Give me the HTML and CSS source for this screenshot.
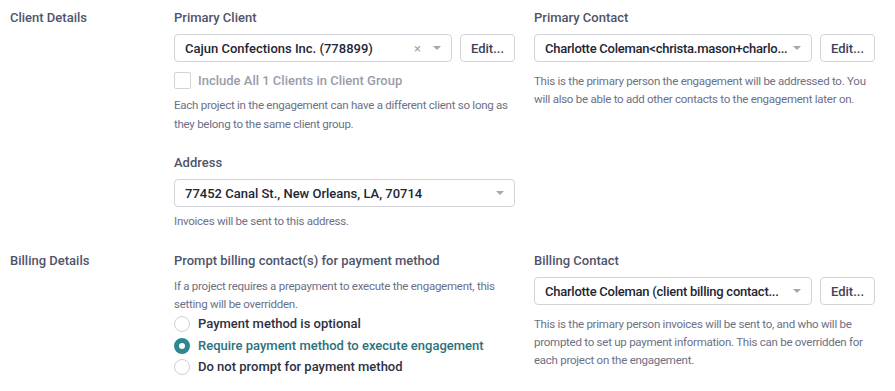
FILE: index.html
```html
<!DOCTYPE html>
<html lang="en">

<head>
    <meta charset="UTF-8">
    <meta name="viewport" content="width=device-width, initial-scale=1.0">
    <title>Engagement Details</title>
    <link rel="stylesheet" href="styles.css">
</head>

<body>
    <div class="section">
        <div class="section-title">Client Details</div>

        <div class="column">
            <div class="field-label">Primary Client</div>
            <div class="field-row">
                <div class="select">
                    <span class="select-value">Cajun Confections Inc. (778899)</span>
                    <span class="select-clear">&times;</span>
                    <span class="select-arrow"></span>
                </div>
                <button type="button" class="edit-button">Edit...</button>
            </div>
            <label class="checkbox-row">
                <span class="checkbox"></span>
                <span>Include All 1 Clients in Client Group</span>
            </label>
            <p class="help help-group">Each project in the engagement can have a different client so long as they belong to the same client group.</p>

            <div class="field-label address-label">Address</div>
            <div class="select select-wide">
                <span class="select-value">77452 Canal St., New Orleans, LA, 70714</span>
                <span class="select-arrow"></span>
            </div>
            <p class="help help-address">Invoices will be sent to this address.</p>
        </div>

        <div class="column">
            <div class="field-label">Primary Contact</div>
            <div class="field-row">
                <div class="select">
                    <span class="select-value tight" title="Charlotte Coleman&lt;christa.mason+charlotte.coleman@example.com&gt;">Charlotte Coleman&lt;christa.mason+charlo...</span>
                    <span class="select-arrow"></span>
                </div>
                <button type="button" class="edit-button">Edit...</button>
            </div>
            <p class="help help-contact">This is the primary person the engagement will be addressed to. You will also be able to add other contacts to the engagement later on.</p>
        </div>
    </div>

    <div class="section section-billing">
        <div class="section-title">Billing Details</div>

        <div class="column">
            <div class="field-label">Prompt billing contact(s) for payment method</div>
            <p class="help help-prompt">If a project requires a prepayment to execute the engagement, this setting will be overridden.</p>
            <div class="radio-list">
                <label class="radio-row">
                    <span class="radio"></span>
                    <span>Payment method is optional</span>
                </label>
                <label class="radio-row checked">
                    <span class="radio"></span>
                    <span>Require payment method to execute engagement</span>
                </label>
                <label class="radio-row">
                    <span class="radio"></span>
                    <span>Do not prompt for payment method</span>
                </label>
            </div>
        </div>

        <div class="column">
            <div class="field-label">Billing Contact</div>
            <div class="field-row">
                <div class="select">
                    <span class="select-value tight" title="Charlotte Coleman (client billing contact)">Charlotte Coleman (client billing contact...</span>
                    <span class="select-arrow"></span>
                </div>
                <button type="button" class="edit-button">Edit...</button>
            </div>
            <p class="help help-contact">This is the primary person invoices will be sent to, and who will be prompted to set up payment information. This can be overridden for each project on the engagement.</p>
        </div>
    </div>
</body>

</html>
```

FILE: styles.css
```css
body {
    font-family: Roboto, "Liberation Sans", sans-serif;
    margin: 0;
    background-color: #fff;
    color: #252a3a;
}

.section {
    display: grid;
    grid-template-columns: 145px 341px 341px;
    column-gap: 19px;
    padding: 9px 0 0 10px;
}

.section-billing {
    padding-top: 22px;
}

.section-title,
.field-label {
    font-size: 13px;
    font-weight: 500;
    line-height: 18px;
    color: #4f546a;
    white-space: nowrap;
}

.field-label {
    margin-bottom: 7px;
}

.address-label {
    margin-top: 20px;
}

.field-row {
    display: flex;
    gap: 8px;
}

.select {
    flex: 1;
    min-width: 0;
    height: 28px;
    box-sizing: border-box;
    border: 1px solid #d3d4d9;
    border-radius: 4px;
    display: flex;
    align-items: center;
    padding: 0 10px;
    font-size: 13px;
    font-weight: 500;
    color: #222634;
}

.select-value {
    flex: 1;
    min-width: 0;
    white-space: nowrap;
    overflow: hidden;
}

.select-value.tight {
    letter-spacing: -0.25px;
}

.select-clear {
    color: #a3a5ad;
    font-size: 13px;
    font-weight: 400;
    margin: 0 8px 0 10px;
}

.select-arrow {
    width: 0;
    height: 0;
    border-left: 4px solid transparent;
    border-right: 4px solid transparent;
    border-top: 4px solid #a5a7ae;
    margin-left: 4px;
}

.edit-button {
    width: 55px;
    height: 28px;
    border: 1px solid #d3d4d9;
    border-radius: 4px;
    background: #fff;
    font-family: inherit;
    font-size: 13px;
    font-weight: 500;
    color: #3e4359;
    padding: 0;
}

.checkbox-row {
    display: flex;
    align-items: center;
    gap: 7px;
    margin-top: 10px;
    font-size: 13px;
    font-weight: 500;
    color: #9a9cab;
}

.checkbox {
    width: 15px;
    height: 15px;
    border: 1px solid #d3d4d9;
    border-radius: 2px;
}

.help {
    margin: 0;
    font-size: 11.5px;
    line-height: 18px;
    color: #6c7086;
    letter-spacing: -0.25px;
}

.help-group {
    margin-top: 7px;
    line-height: 19px;
}

.help-address {
    margin-top: 5px;
}

.help-contact {
    margin-top: 10px;
}

.help-prompt {
    margin-top: 7px;
}

.radio-list {
    display: flex;
    flex-direction: column;
    gap: 5px;
    margin-top: 3px;
}

.radio-row {
    display: flex;
    align-items: center;
    gap: 8px;
    font-size: 13px;
    font-weight: 500;
    line-height: 16.5px;
    color: #2c3142;
}

.radio {
    width: 16px;
    height: 16px;
    box-sizing: border-box;
    border: 1px solid #cfd0d6;
    border-radius: 50%;
    background: #fff;
}

.radio-row.checked {
    color: #2b727b;
}

.radio-row.checked .radio {
    border: 5px solid #2d8791;
}
```
